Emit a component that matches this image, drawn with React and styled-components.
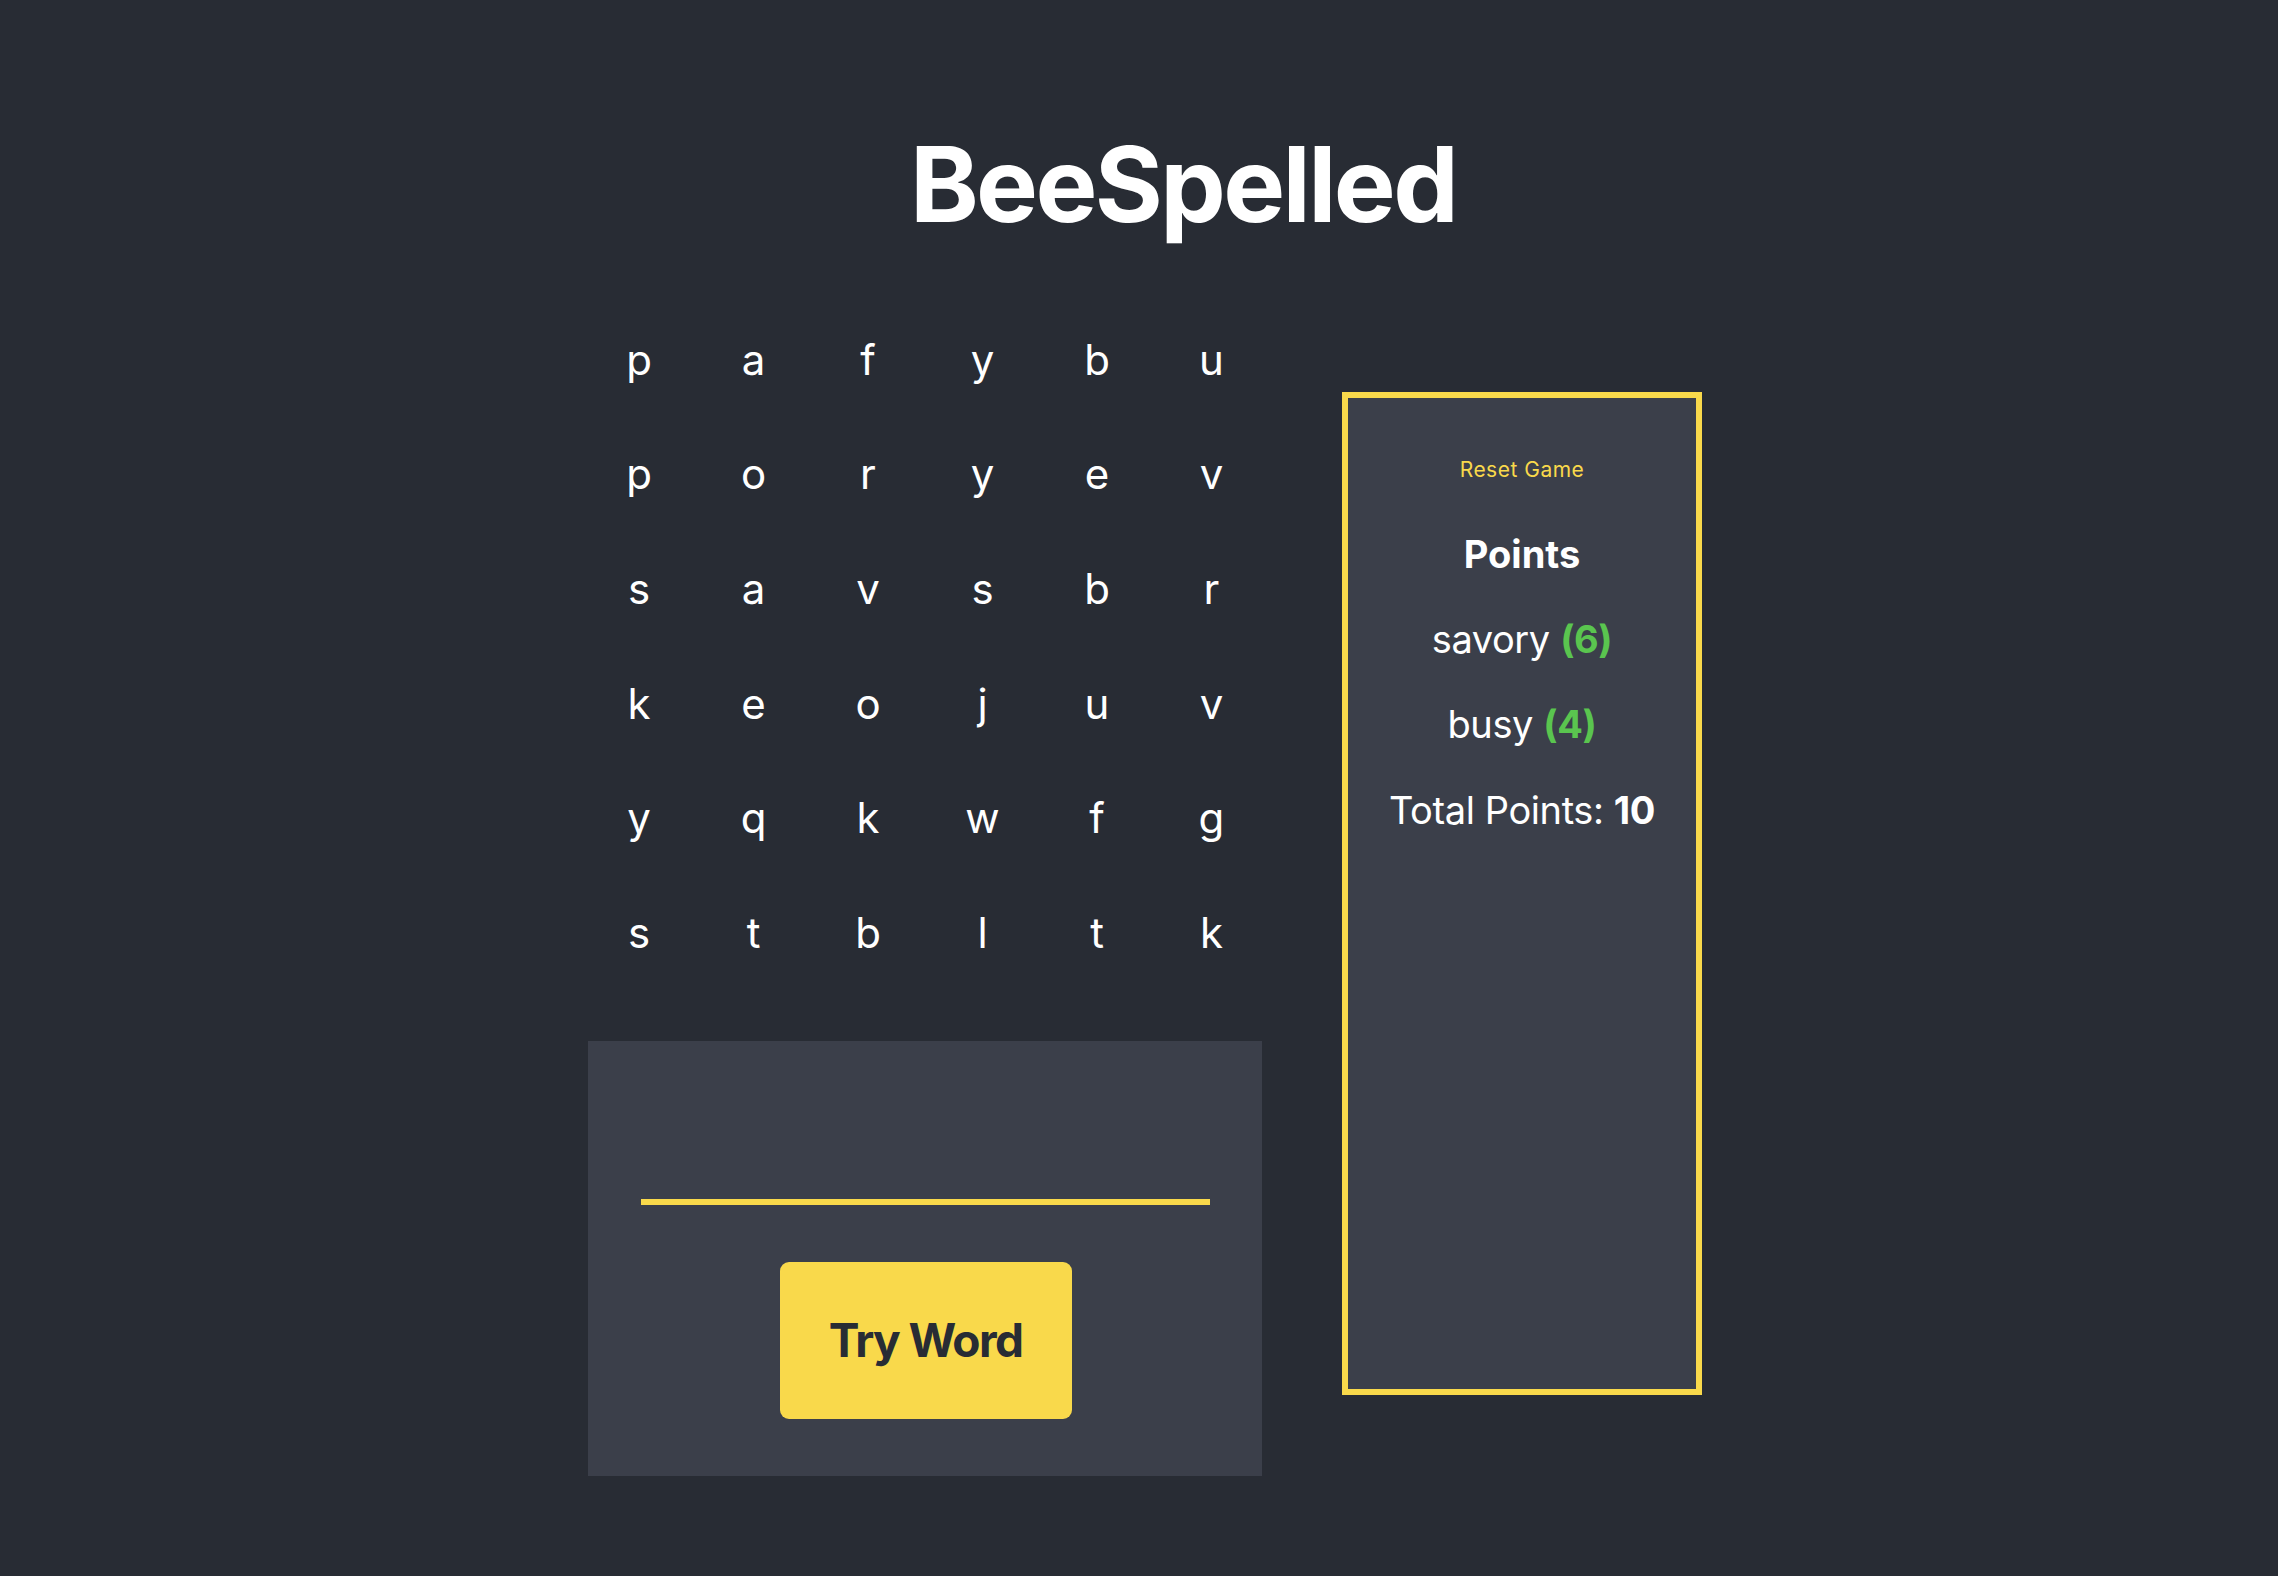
import React from 'react'
import styled, { createGlobalStyle } from 'styled-components'

const GlobalStyle = createGlobalStyle`
    html, body {
        margin:0;
        padding:0;
        background-color:#282c34;
    }
    body {
        font-family:Inter, 'Noto Sans', sans-serif;
        color:white;
    }
`

const letters = [
    ['p', 'a', 'f', 'y', 'b', 'u'],
    ['p', 'o', 'r', 'y', 'e', 'v'],
    ['s', 'a', 'v', 's', 'b', 'r'],
    ['k', 'e', 'o', 'j', 'u', 'v'],
    ['y', 'q', 'k', 'w', 'f', 'g'],
    ['s', 't', 'b', 'l', 't', 'k'],
]

const words = [
    { word: 'savory', points: 6 },
    { word: 'busy', points: 4 },
]

const PageLayout = styled.div`
    display:flex;
    flex-direction:column;
    align-items:center;
    min-height:1576px;
    box-sizing:border-box;
    padding-top:121px;
`

const Title = styled.h1`
    margin:0 0 55px 0;
    padding-left:88px;
    font-size:104px;
    font-weight:700;
    letter-spacing:-2.6px;
    line-height:126px;
`

const MainRow = styled.div`
    display:flex;
    align-items:center;
    justify-content:center;
    gap:80px;
    padding-left:12px;
`

const LeftColumn = styled.div`
    display:flex;
    flex-direction:column;
    align-items:center;
    width:674px;
    gap:51px;
`

const Grid = styled.div`
    display:grid;
    grid-template-columns:repeat(6, 103px);
    grid-auto-rows:114.6px;
    column-gap:11.5px;
`

const Cell = styled.div`
    display:flex;
    align-items:center;
    justify-content:center;
    font-size:42px;
    font-weight:400;
    letter-spacing:-0.5px;
`

const InputBox = styled.div`
    width:100%;
    box-sizing:border-box;
    background-color:#3b3f4a;
    padding:57px 52px 57px 53px;
    display:flex;
    flex-direction:column;
    align-items:center;
    gap:57px;
`

const WordInput = styled.input`
    width:100%;
    height:107px;
    box-sizing:border-box;
    background:transparent;
    border:none;
    border-bottom:6px solid #f9d94b;
    outline:none;
    color:white;
    font-family:inherit;
    font-size:42px;
    text-align:center;
`

const TryButton = styled.button`
    width:292px;
    height:157px;
    background-color:#f9d94b;
    color:#282c34;
    border:none;
    border-radius:9px;
    font-family:Inter, sans-serif;
    font-size:46px;
    font-weight:700;
    letter-spacing:-1.6px;
`

const PointsPanel = styled.div`
    width:360px;
    height:1003px;
    box-sizing:border-box;
    border:6px solid #f9d94b;
    background-color:#3b3f4a;
    display:flex;
    flex-direction:column;
    align-items:center;
    padding-top:59px;
    margin-top:10px;
`

const ResetButton = styled.button`
    background:none;
    border:none;
    padding:0;
    color:#f9d94b;
    font-family:Inter, sans-serif;
    font-size:21px;
    line-height:25px;
    letter-spacing:0.5px;
`

const PanelHeading = styled.h2`
    margin:48px 0 0 0;
    font-size:38px;
    font-weight:700;
    line-height:48px;
    letter-spacing:0px;
`

const PanelLine = styled.div`
    margin-top:${props => props.gap || 37}px;
    font-size:38px;
    line-height:48px;
    letter-spacing:-0.4px;
`

const Score = styled.span`
    color:#5ac54f;
    font-weight:700;
`

const App = () => {
    const total = words.reduce((sum, w) => sum + w.points, 0)
    return (
        <PageLayout>
            <GlobalStyle />
            <Title>BeeSpelled</Title>
            <MainRow>
                <LeftColumn>
                    <Grid>
                        {letters.map((row, r) =>
                            row.map((letter, c) => (
                                <Cell key={r + '-' + c}>{letter}</Cell>
                            ))
                        )}
                    </Grid>
                    <InputBox>
                        <WordInput type="text" />
                        <TryButton>Try Word</TryButton>
                    </InputBox>
                </LeftColumn>
                <PointsPanel>
                    <ResetButton>Reset Game</ResetButton>
                    <PanelHeading>Points</PanelHeading>
                    {words.map(w => (
                        <PanelLine key={w.word}>
                            {w.word} <Score>({w.points})</Score>
                        </PanelLine>
                    ))}
                    <PanelLine gap={38}>
                        Total Points: <b>{total}</b>
                    </PanelLine>
                </PointsPanel>
            </MainRow>
        </PageLayout>
    )
}

export default App
